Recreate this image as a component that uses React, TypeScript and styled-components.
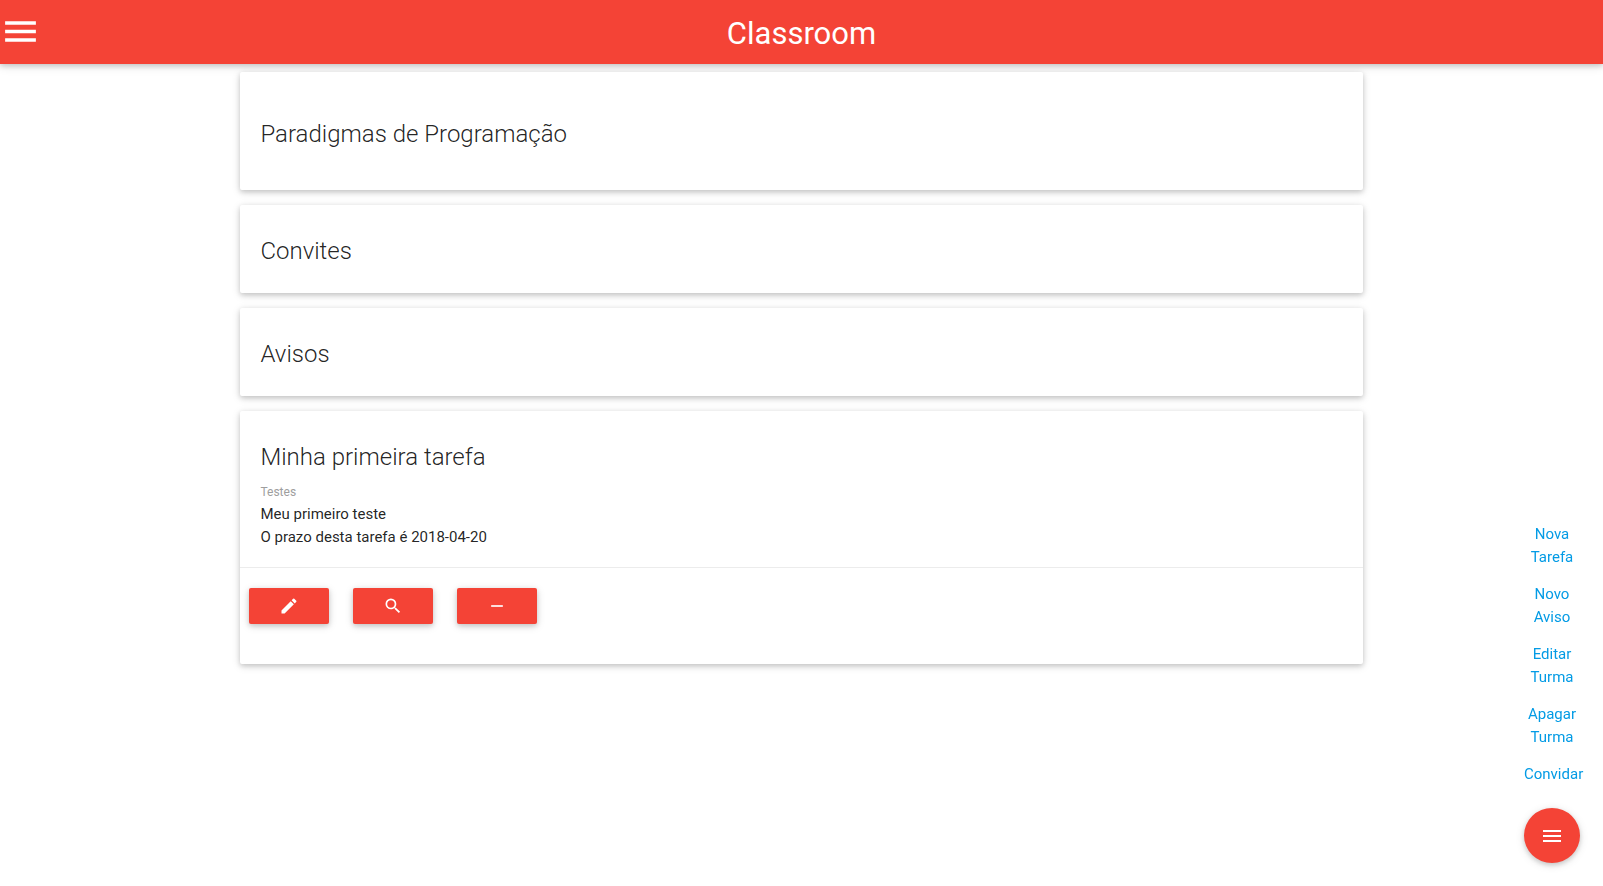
import React from "react";
import styled, { createGlobalStyle } from "styled-components";
import { MdEdit, MdMenu, MdRemove, MdSearch } from "react-icons/md";

const RED = "#f44336";
const SHADOW = "0 2px 5px 0 rgba(0,0,0,0.16), 0 2px 10px 0 rgba(0,0,0,0.12)";

const GlobalStyle = createGlobalStyle`
  *, *::before, *::after { box-sizing: border-box; }
  body {
    margin: 0;
    background: #fff;
    color: rgba(0, 0, 0, 0.87);
    font-family: Roboto, sans-serif;
    font-size: 15px;
    line-height: 23px;
  }
`;

const NavBar = styled.header`
  display: grid;
  grid-template-columns: 1fr auto 1fr;
  align-items: center;
  height: 64px;
  background: ${RED};
  color: #fff;
  box-shadow: ${SHADOW};
`;

const MenuButton = styled.button`
  display: flex;
  justify-self: start;
  padding: 0 0 1px;
  border: 0;
  background: none;
  color: inherit;
  cursor: pointer;
`;

const Brand = styled.a`
  padding-top: 4px;
  color: inherit;
  font-size: 31px;
  line-height: 60px;
  text-decoration: none;
`;

const Container = styled.main`
  display: flex;
  flex-direction: column;
  gap: 15px;
  width: 70%;
  margin: 8px auto 15px;
`;

const Card = styled.section`
  border-radius: 2px;
  background: #fff;
  box-shadow: ${SHADOW};
`;

const CardContent = styled.div<{ $tall?: boolean }>`
  padding: ${({ $tall }) => ($tall ? "38px 20px 32px" : "22px 20px 18px")};
`;

const CardTitle = styled.h2`
  margin: 0;
  font-size: 24px;
  font-weight: 300;
  line-height: 48px;
`;

const Category = styled.p`
  margin: 0;
  color: #9e9e9e;
  font-size: 12px;
  line-height: 22px;
`;

const Text = styled.p`
  margin: 0;
`;

const CardActions = styled.div`
  display: flex;
  gap: 24px;
  padding: 20px 9px 40px;
  border-top: 1px solid rgba(160, 160, 160, 0.2);
`;

const ActionButton = styled.button`
  display: flex;
  align-items: center;
  justify-content: center;
  width: 80px;
  height: 36px;
  padding: 0;
  border: 0;
  border-radius: 2px;
  background: ${RED};
  color: #fff;
  box-shadow: ${SHADOW};
  cursor: pointer;
`;

const FloatingMenu = styled.nav`
  position: fixed;
  right: 23px;
  bottom: 23px;
  width: 56px;
`;

const LinkList = styled.ul`
  display: flex;
  flex-direction: column;
  gap: 14px;
  margin: 0 0 22px;
  padding: 0;
  list-style: none;
  text-align: center;
`;

const MenuLink = styled.a`
  display: block;
  color: #039be5;
  text-decoration: none;
`;

const RoundButton = styled(ActionButton)`
  width: 56px;
  height: 55px;
  border-radius: 50%;
`;

const links = ["Nova Tarefa", "Novo Aviso", "Editar Turma", "Apagar Turma", "Convidar"];

export default function App() {
  return (
    <>
      <GlobalStyle />
      <NavBar>
        <MenuButton type="button" aria-label="Menu">
          <MdMenu size={41} />
        </MenuButton>
        <Brand href="#">Classroom</Brand>
      </NavBar>
      <Container>
        <Card>
          <CardContent $tall>
            <CardTitle>Paradigmas de Programação</CardTitle>
          </CardContent>
        </Card>
        <Card>
          <CardContent>
            <CardTitle>Convites</CardTitle>
          </CardContent>
        </Card>
        <Card>
          <CardContent>
            <CardTitle>Avisos</CardTitle>
          </CardContent>
        </Card>
        <Card>
          <CardContent>
            <CardTitle>Minha primeira tarefa</CardTitle>
            <Category>Testes</Category>
            <Text>Meu primeiro teste</Text>
            <Text>O prazo desta tarefa é 2018-04-20</Text>
          </CardContent>
          <CardActions>
            <ActionButton type="button" aria-label="Editar">
              <MdEdit size={20} />
            </ActionButton>
            <ActionButton type="button" aria-label="Ver">
              <MdSearch size={20} />
            </ActionButton>
            <ActionButton type="button" aria-label="Remover">
              <MdRemove size={20} />
            </ActionButton>
          </CardActions>
        </Card>
      </Container>
      <FloatingMenu>
        <LinkList>
          {links.map((label) => (
            <li key={label}>
              <MenuLink href="#">{label}</MenuLink>
            </li>
          ))}
        </LinkList>
        <RoundButton type="button" aria-label="Opções">
          <MdMenu size={24} />
        </RoundButton>
      </FloatingMenu>
    </>
  );
}
